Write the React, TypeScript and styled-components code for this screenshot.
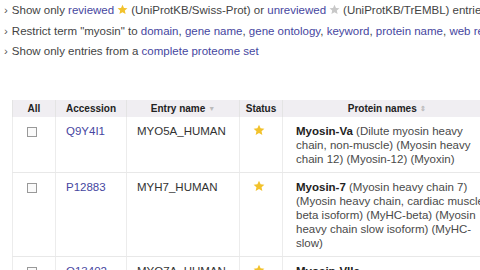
import React from "react";
import styled, { createGlobalStyle } from "styled-components";

const Global = createGlobalStyle`
  html, body { margin: 0; padding: 0; background: #fff; overflow: hidden; }
  body { font-family: "Liberation Sans", Arial, sans-serif; color: #333; }
`;

const Page = styled.div`
  width: 480px;
  height: 270px;
  overflow: hidden;
`;

const Filters = styled.ul`
  list-style: none;
  margin: 0;
  padding: 0 0 0 4px;
  height: 100px;
  white-space: nowrap;
`;

const FilterItem = styled.li`
  font-size: 11.5px;
  line-height: 20.5px;
  color: #444;
  &::before {
    content: "›";
    margin-right: 4px;
    color: #555;
  }
`;

const A = styled.a`
  color: #4646a0;
  text-decoration: none;
`;

const Star = ({ color, size = 11 }: { color: string; size?: number }) => (
  <svg width={size} height={size} viewBox="0 0 24 24" style={{ verticalAlign: "-1px", margin: "0 3px" }}>
    <path
      d="M12 1.5l3.2 7 7.6.8-5.7 5.1 1.6 7.5L12 18l-6.7 3.9 1.6-7.5L1.2 9.3l7.6-.8z"
      fill={color}
    />
  </svg>
);

const Table = styled.table`
  margin-left: 12px;
  border-collapse: collapse;
  table-layout: fixed;
  width: 484px;
  min-width: 484px;
`;

const Col = styled.col<{ $w: number }>`
  width: ${(p) => p.$w}px;
`;

const Th = styled.th`
  background: #f0eef2;
  font-size: 10px;
  font-weight: bold;
  color: #222;
  height: 17px;
  padding: 0;
  text-align: center;
  border-left: 1px solid #e4e4e4;
  white-space: nowrap;
  overflow: hidden;
`;

const ProteinTh = styled(Th)`
  padding-right: 6px;
`;

const Sort = styled.span`
  color: #bbb;
  font-size: 7px;
  margin-left: 3px;
  vertical-align: 1px;
`;

const Td = styled.td<{ $pad?: number; $center?: boolean }>`
  vertical-align: top;
  padding: 7px 4px 5px ${(p) => p.$pad ?? 10}px;
  font-size: 11.5px;
  line-height: 14px;
  color: #333;
  text-align: ${(p) => (p.$center ? "center" : "left")};
  border-left: 1px solid #ececec;
  border-bottom: 1px solid #e8e8e8;
`;

const ProteinTd = styled(Td)`
  font-size: 11.5px;
  line-height: 14.2px;
  padding-left: 13px;
  padding-right: 5px;
  color: #4a4a4a;
`;

const Box = styled.span`
  display: inline-block;
  width: 8px;
  height: 8px;
  border: 1px solid #999;
  background: #fafafa;
  margin-top: 3px;
`;

const Bold = styled.b`
  color: #222;
`;

const rows = [
  {
    acc: "Q9Y4I1",
    entry: "MYO5A_HUMAN",
    name: "Myosin-Va",
    rest: " (Dilute myosin heavy chain, non-muscle) (Myosin heavy chain 12) (Myosin-12) (Myoxin)",
  },
  {
    acc: "P12883",
    entry: "MYH7_HUMAN",
    name: "Myosin-7",
    rest: " (Myosin heavy chain 7) (Myosin heavy chain, cardiac muscle beta isoform) (MyHC-beta) (Myosin heavy chain slow isoform) (MyHC-slow)",
  },
  {
    acc: "Q13402",
    entry: "MYO7A_HUMAN",
    name: "Myosin-VIIa",
    rest: "",
  },
];

export default function App() {
  return (
    <Page>
      <Global />
      <Filters>
        <FilterItem>
          Show only <A href="#">reviewed</A>
          <Star color="#f2c22c" />
          (UniProtKB/Swiss-Prot) or <A href="#">unreviewed</A>
          <Star color="#c8c8c8" />
          (UniProtKB/TrEMBL) entries
        </FilterItem>
        <FilterItem>
          Restrict term "myosin" to <A href="#">domain</A>, <A href="#">gene name</A>,{" "}
          <A href="#">gene ontology</A>, <A href="#">keyword</A>, <A href="#">protein name</A>,{" "}
          <A href="#">web resource</A>
        </FilterItem>
        <FilterItem>
          Show only entries from a <A href="#">complete proteome set</A>
        </FilterItem>
      </Filters>
      <Table>
        <colgroup>
          <Col $w={43} />
          <Col $w={71} />
          <Col $w={113} />
          <Col $w={43} />
          <Col $w={214} />
        </colgroup>
        <thead>
          <tr>
            <Th>All</Th>
            <Th>Accession</Th>
            <Th>
              Entry name<Sort>▼</Sort>
            </Th>
            <Th>Status</Th>
            <ProteinTh>
              Protein names<Sort>⇕</Sort>
            </ProteinTh>
          </tr>
        </thead>
        <tbody>
          {rows.map((r) => (
            <tr key={r.acc}>
              <Td $pad={0} $center>
                <Box />
              </Td>
              <Td>
                <A href="#">{r.acc}</A>
              </Td>
              <Td>{r.entry}</Td>
              <Td $pad={0} $center>
                <Star color="#f2c22c" size={12} />
              </Td>
              <ProteinTd>
                <Bold>{r.name}</Bold>
                {r.rest}
              </ProteinTd>
            </tr>
          ))}
        </tbody>
      </Table>
    </Page>
  );
}
